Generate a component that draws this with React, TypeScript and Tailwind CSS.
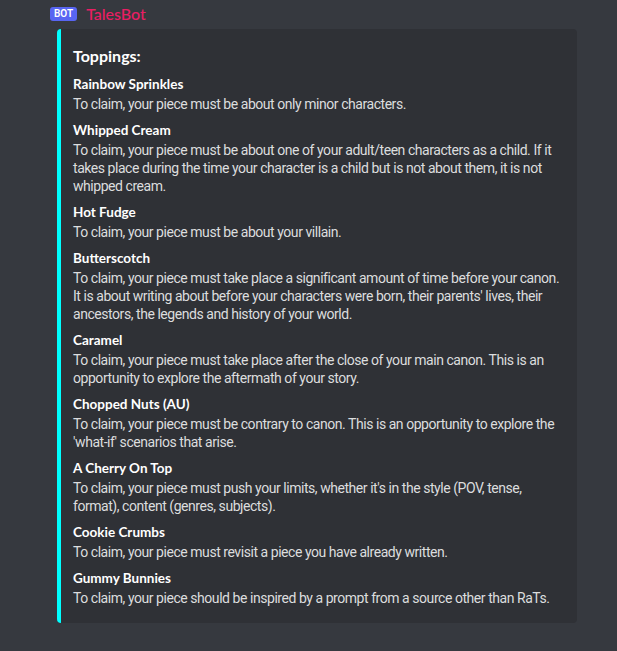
const fields = [
  { name: "Rainbow Sprinkles", lines: ["To claim, your piece must be about only minor characters."] },
  {
    name: "Whipped Cream",
    lines: [
      "To claim, your piece must be about one of your adult/teen characters as a child. If it",
      "takes place during the time your character is a child but is not about them, it is not",
      "whipped cream.",
    ],
  },
  { name: "Hot Fudge", lines: ["To claim, your piece must be about your villain."] },
  {
    name: "Butterscotch",
    lines: [
      "To claim, your piece must take place a significant amount of time before your canon.",
      "It is about writing about before your characters were born, their parents' lives, their",
      "ancestors, the legends and history of your world.",
    ],
  },
  {
    name: "Caramel",
    lines: [
      "To claim, your piece must take place after the close of your main canon. This is an",
      "opportunity to explore the aftermath of your story.",
    ],
  },
  {
    name: "Chopped Nuts (AU)",
    lines: [
      "To claim, your piece must be contrary to canon. This is an opportunity to explore the",
      "'what-if' scenarios that arise.",
    ],
  },
  {
    name: "A Cherry On Top",
    lines: [
      "To claim, your piece must push your limits, whether it's in the style (POV, tense,",
      "format), content (genres, subjects).",
    ],
  },
  { name: "Cookie Crumbs", lines: ["To claim, your piece must revisit a piece you have already written."] },
  {
    name: "Gummy Bunnies",
    lines: ["To claim, your piece should be inspired by a prompt from a source other than RaTs."],
  },
]

export default function App() {
  return (
    <div
      className="w-[617px] h-[651px] bg-[#36393f] overflow-hidden"
      style={{ fontFamily: 'Roboto, "Noto Sans", sans-serif' }}
    >
      <div className="pl-[50px] pt-[4px]">
        <div className="flex items-center h-[20px]">
          <span className="bg-[#5865f2] text-white text-[10px] font-semibold leading-[14px] px-[4px] rounded-[3px] mr-[9px]">
            BOT
          </span>
          <span className="text-[#e91e63] text-[16px] font-medium leading-[20px] font-['Lato']">TalesBot</span>
        </div>
      </div>
      <div className="ml-[57px] mt-[5px] w-[520px] bg-[#2f3136] rounded-[4px] border-l-4 border-[#00ffff] pt-[8px] pr-[16px] pb-[16px] pl-[12px]">
        <div className="mt-[8px] text-white text-[16px] font-bold leading-[22px] font-['Lato']">Toppings:</div>
        <div className="flex flex-col gap-[8px] mt-[8px]">
          {fields.map((f) => (
            <div key={f.name}>
              <div className="text-white text-[13.5px] font-bold leading-[18px] mb-[2px] font-['Lato']">{f.name}</div>
              <div className="text-[#dcddde] text-[14px] leading-[18px] tracking-[-0.45px]">
                {f.lines.map((l) => (
                  <div key={l} className="whitespace-nowrap">
                    {l}
                  </div>
                ))}
              </div>
            </div>
          ))}
        </div>
      </div>
    </div>
  )
}
